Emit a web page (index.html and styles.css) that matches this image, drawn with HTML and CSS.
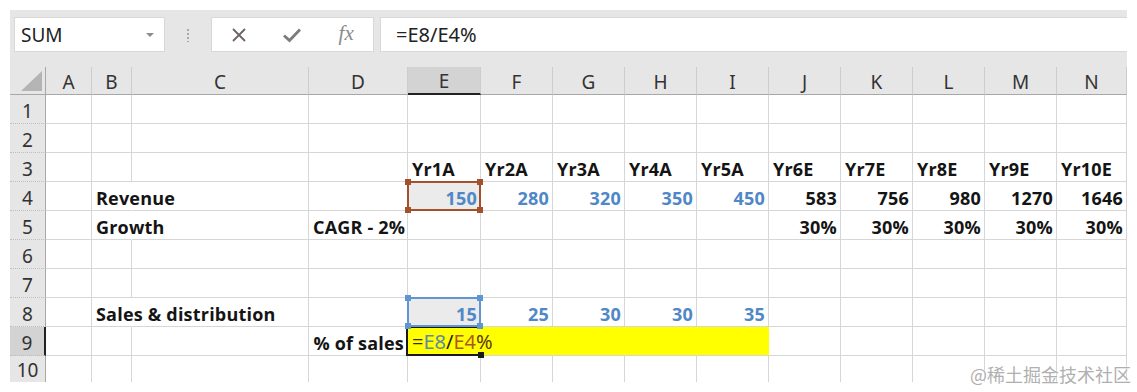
FILE: index.html
```html
<!DOCTYPE html>
<html>

<head>
    <title>Sheet - % of sales</title>
    <link rel="stylesheet" href="styles.css">
</head>

<body>
    <div class="app">
        <div class="toolbar">
            <div class="namebox">
                <span>SUM</span>
                <span class="caret"></span>
            </div>
            <div class="grip"><span></span></div>
            <div class="fx-buttons">
                <svg width="16" height="16" viewBox="0 0 16 16">
                    <path d="M2 2 L14 14 M14 2 L2 14" stroke="#6e6363" stroke-width="1.8" fill="none" />
                </svg>
                <svg width="20" height="16" viewBox="0 0 20 16">
                    <path d="M2 8.5 L7.5 13.5 L18 2.5" stroke="#7c7c7c" stroke-width="2.8" fill="none" />
                </svg>
                <span class="fx">fx</span>
            </div>
            <div class="formula">=E8/E4%</div>
        </div>

        <div class="sheet">
            <!-- column headers -->
            <div class="corner"><span></span></div>
            <div class="h">A</div>
            <div class="h">B</div>
            <div class="h">C</div>
            <div class="h">D</div>
            <div class="h sel">E</div>
            <div class="h">F</div>
            <div class="h">G</div>
            <div class="h">H</div>
            <div class="h">I</div>
            <div class="h">J</div>
            <div class="h">K</div>
            <div class="h">L</div>
            <div class="h">M</div>
            <div class="h">N</div>

            <!-- row 1 -->
            <div class="r">1</div>
            <div class="c"></div><div class="c"></div><div class="c"></div><div class="c"></div>
            <div class="c"></div><div class="c"></div><div class="c"></div><div class="c"></div><div class="c"></div>
            <div class="c"></div><div class="c"></div><div class="c"></div><div class="c"></div><div class="c"></div>

            <!-- row 2 -->
            <div class="r">2</div>
            <div class="c"></div><div class="c"></div><div class="c"></div><div class="c"></div>
            <div class="c"></div><div class="c"></div><div class="c"></div><div class="c"></div><div class="c"></div>
            <div class="c"></div><div class="c"></div><div class="c"></div><div class="c"></div><div class="c"></div>

            <!-- row 3 -->
            <div class="r">3</div>
            <div class="c"></div><div class="c"></div><div class="c"></div><div class="c"></div>
            <div class="c">Yr1A</div>
            <div class="c">Yr2A</div>
            <div class="c">Yr3A</div>
            <div class="c">Yr4A</div>
            <div class="c">Yr5A</div>
            <div class="c">Yr6E</div>
            <div class="c">Yr7E</div>
            <div class="c">Yr8E</div>
            <div class="c">Yr9E</div>
            <div class="c">Yr10E</div>

            <!-- row 4 -->
            <div class="r">4</div>
            <div class="c"></div>
            <div class="c spill">Revenue</div>
            <div class="c"></div><div class="c"></div>
            <div class="c n blue picked">150<i class="ref brown"><b class="tl"></b><b class="tr"></b><b class="bl"></b><b class="br"></b></i></div>
            <div class="c n blue">280</div>
            <div class="c n blue">320</div>
            <div class="c n blue">350</div>
            <div class="c n blue">450</div>
            <div class="c n">583</div>
            <div class="c n">756</div>
            <div class="c n">980</div>
            <div class="c n">1270</div>
            <div class="c n">1646</div>

            <!-- row 5 -->
            <div class="r">5</div>
            <div class="c"></div>
            <div class="c spill">Growth</div>
            <div class="c"></div>
            <div class="c">CAGR - 2%</div>
            <div class="c"></div><div class="c"></div><div class="c"></div><div class="c"></div><div class="c"></div>
            <div class="c n">30%</div>
            <div class="c n">30%</div>
            <div class="c n">30%</div>
            <div class="c n">30%</div>
            <div class="c n">30%</div>

            <!-- row 6 -->
            <div class="r">6</div>
            <div class="c"></div><div class="c"></div><div class="c"></div><div class="c"></div>
            <div class="c"></div><div class="c"></div><div class="c"></div><div class="c"></div><div class="c"></div>
            <div class="c"></div><div class="c"></div><div class="c"></div><div class="c"></div><div class="c"></div>

            <!-- row 7 -->
            <div class="r">7</div>
            <div class="c"></div><div class="c"></div><div class="c"></div><div class="c"></div>
            <div class="c"></div><div class="c"></div><div class="c"></div><div class="c"></div><div class="c"></div>
            <div class="c"></div><div class="c"></div><div class="c"></div><div class="c"></div><div class="c"></div>

            <!-- row 8 -->
            <div class="r">8</div>
            <div class="c"></div>
            <div class="c spill">Sales &amp; distribution</div>
            <div class="c"></div><div class="c"></div>
            <div class="c n blue picked">15<i class="ref blue-ref"><b class="tl"></b><b class="tr"></b><b class="bl"></b><b class="br"></b></i></div>
            <div class="c n blue">25</div>
            <div class="c n blue">30</div>
            <div class="c n blue">30</div>
            <div class="c n blue">35</div>
            <div class="c"></div><div class="c"></div><div class="c"></div><div class="c"></div><div class="c"></div>

            <!-- row 9 (editing) -->
            <div class="r sel">9</div>
            <div class="c"></div><div class="c"></div><div class="c"></div>
            <div class="c n">% of sales</div>
            <div class="c hl editing"><span class="eq">=</span><span class="rb">E8</span><span class="sl">/</span><span class="rr">E4</span><span class="pc">%</span><span class="cursor"></span><i class="active"><b></b></i></div>
            <div class="c hl"></div>
            <div class="c hl"></div>
            <div class="c hl"></div>
            <div class="c hl"></div>
            <div class="c"></div><div class="c"></div><div class="c"></div><div class="c"></div><div class="c"></div>

            <!-- row 10 -->
            <div class="r last">10</div>
            <div class="c last"></div><div class="c last"></div><div class="c last"></div><div class="c last"></div>
            <div class="c last"></div><div class="c last"></div><div class="c last"></div><div class="c last"></div><div class="c last"></div>
            <div class="c last"></div><div class="c last"></div><div class="c last"></div><div class="c last"></div><div class="c last"></div>
        </div>
    </div>

    <div class="watermark">@稀土掘金技术社区</div>
</body>

</html>
```

FILE: styles.css
```css
body {
    margin: 0;
    background: #fff;
    font-family: "Noto Sans", "Open Sans", sans-serif;
}

.app {
    margin: 10px;
    width: 1117px;
    background: #e6e6e6;
}

/* formula bar */
.toolbar {
    display: flex;
    align-items: flex-start;
    height: 57px;
    padding: 7px 0 0 4px;
    box-sizing: border-box;
}

.namebox {
    width: 151px;
    height: 35px;
    box-sizing: border-box;
    background: #fff;
    border: 1px solid #d8d8d8;
    display: flex;
    align-items: center;
    padding-left: 6px;
    font-size: 19px;
    color: #222;
}

.caret {
    margin-left: auto;
    margin-right: 10px;
    border-left: 4px solid transparent;
    border-right: 4px solid transparent;
    border-top: 4px solid #8c8c8c;
}

.grip {
    width: 46px;
    height: 35px;
    display: flex;
    align-items: center;
    justify-content: center;
}

.grip span {
    width: 5px;
    height: 14px;
    background-image: radial-gradient(circle, #a8a8a8 1px, transparent 1.3px);
    background-size: 4px 4px;
}

.fx-buttons {
    width: 163px;
    height: 35px;
    box-sizing: border-box;
    background: #fff;
    border: 1px solid #d8d8d8;
    display: grid;
    grid-template-columns: repeat(3, 1fr);
    align-items: center;
    justify-items: center;
}

.fx {
    font-family: "Liberation Serif", serif;
    font-style: italic;
    font-size: 21px;
    color: #8a8a8a;
    margin-top: -2px;
}

.formula {
    flex: 1;
    margin-left: 6px;
    height: 35px;
    box-sizing: border-box;
    background: #fff;
    border: 1px solid #d8d8d8;
    border-right: none;
    padding-left: 15px;
    display: flex;
    align-items: center;
    font-size: 20px;
    color: #222;
}

/* grid */
.sheet {
    display: grid;
    grid-template-columns: 36px 46px 40px 177px 99px 73px repeat(8, 72px) 70px;
    grid-template-rows: 28px repeat(9, 29px) 26px;
    background: #fff;
}

.corner {
    background: #e6e6e6;
    border-right: 1px solid #a8a8a8;
    border-bottom: 1px solid #a8a8a8;
    display: flex;
    align-items: flex-end;
    justify-content: flex-end;
    padding: 0 3px 3px 0;
}

.corner span {
    width: 21px;
    height: 20px;
    background: #b4b4b4;
    clip-path: polygon(100% 0, 100% 100%, 0 100%);
}

.h {
    background: #e6e6e6;
    border-right: 1px solid #cdcdcd;
    border-bottom: 1px solid #a8a8a8;
    display: flex;
    align-items: center;
    justify-content: center;
    padding-top: 2px;
    font-size: 19px;
    color: #333;
}

.h.sel {
    background: #d3d3d3;
    border-bottom: 2px solid #222;
}

.r {
    background: #e6e6e6;
    border-right: 1px solid #a8a8a8;
    border-bottom: 1px dotted #bdbdbd;
    display: flex;
    align-items: center;
    justify-content: center;
    padding-top: 3px;
    font-size: 19px;
    color: #333;
}

.r.sel {
    background: #d3d3d3;
    border-right: 2px solid #222;
}

.r.last {
    align-items: flex-start;
    padding-top: 1px;
    border-bottom: none;
    overflow: hidden;
}

.c {
    position: relative;
    border-right: 1px solid #d6d6d6;
    border-bottom: 1px solid #d6d6d6;
    display: flex;
    align-items: center;
    padding: 3px 4px 0;
    white-space: nowrap;
    font-family: "Open Sans", "Liberation Sans", sans-serif;
    font-weight: bold;
    font-size: 18px;
    letter-spacing: 0.2px;
    color: #141414;
}

.c.last {
    border-bottom: none;
}

.spill {
    border-right-color: transparent;
}

.n {
    justify-content: flex-end;
    padding-right: 3px;
}

.blue {
    color: #4f87c7;
}

.picked {
    background: #ebebeb;
}

/* reference boxes */
.ref {
    position: absolute;
    top: -1px;
    left: -1px;
    right: -1px;
    bottom: -1px;
    border: 2px solid;
    z-index: 2;
}

.ref.brown {
    border-color: #a4512b;
}

.ref.blue-ref {
    border-color: #5f95d0;
}

.ref b {
    position: absolute;
    width: 6px;
    height: 6px;
}

.ref.brown b {
    background: #a4512b;
}

.ref.blue-ref b {
    background: #5f95d0;
}

.ref .tl { top: -4px; left: -4px; }
.ref .tr { top: -4px; right: -4px; }
.ref .bl { bottom: -4px; left: -4px; }
.ref .br { bottom: -4px; right: -4px; }

/* editing row */
.hl {
    background: #ffff00;
    border-right-color: #ffff00;
}

.editing {
    z-index: 1;
    font-weight: normal;
    font-family: "Noto Sans", sans-serif;
    font-size: 20px;
    letter-spacing: 0;
    padding-top: 0;
    overflow: visible;
}

.eq { color: #3a2c0c; }
.rb { color: #5d8aa6; }
.sl { color: #1e1e1e; }
.rr { color: #b0561f; }
.pc { color: #5a3a12; }

.cursor {
    width: 1px;
    height: 22px;
    margin-left: 2px;
    background: #3c7a3c;
}

.active {
    position: absolute;
    top: -1px;
    left: -2px;
    right: -1px;
    bottom: -1px;
    border-left: 2px solid #1a1a1a;
    border-top: 2px solid #1a1a1a;
    border-bottom: 2px solid #1a1a1a;
}

.active b {
    position: absolute;
    right: -3px;
    bottom: -4px;
    width: 6px;
    height: 6px;
    background: #1a1a1a;
}

.watermark {
    position: absolute;
    top: 361px;
    right: 6px;
    font-family: "Noto Sans CJK SC", sans-serif;
    font-size: 18px;
    color: #b0b0b0;
    text-shadow: 0 0 2px #fff;
}
```
